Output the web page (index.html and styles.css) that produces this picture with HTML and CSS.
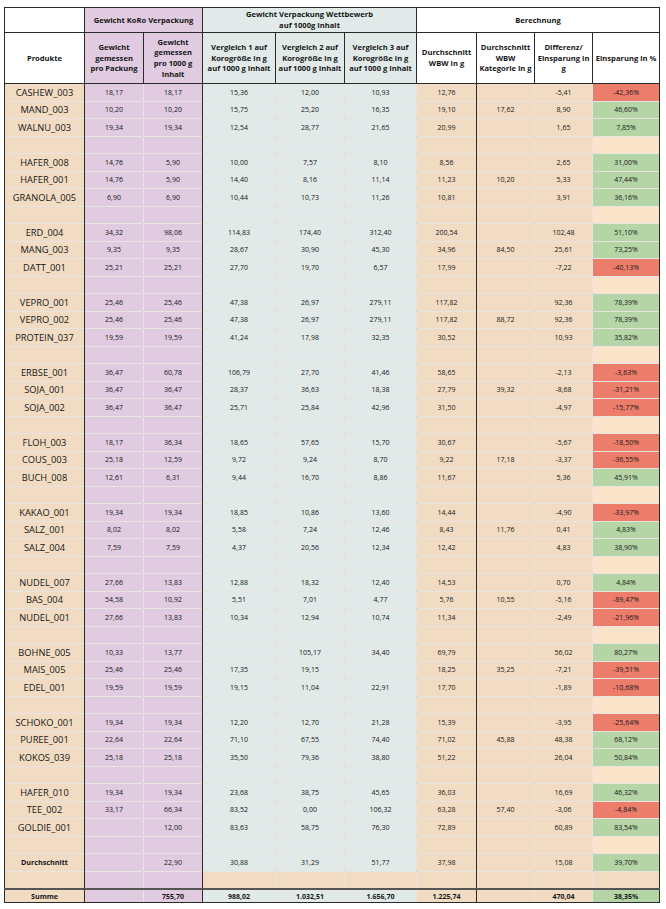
FILE: index.html
```html
<!DOCTYPE html>
<html lang="de">
<head>
<meta charset="utf-8">
<link rel="stylesheet" href="styles.css">
</head>
<body>
<table class="sheet">
<colgroup>
<col class="c-prod"><col class="c-k1"><col class="c-k2"><col class="c-v1"><col class="c-v2"><col class="c-v3"><col class="c-d"><col class="c-dk"><col class="c-diff"><col class="c-pct">
</colgroup>
<thead>
<tr class="h1">
<th class="hw lx"></th>
<th class="hk" colspan="2">Gewicht KoRo Verpackung</th>
<th class="hv" colspan="3">Gewicht Verpackung Wettbewerb<br>auf 1000g Inhalt</th>
<th class="hw rx" colspan="4">Berechnung</th>
</tr>
<tr class="h2">
<th class="hw lx">Produkte</th>
<th class="hk">Gewicht<br>gemessen<br>pro Packung</th>
<th class="hk">Gewicht<br>gemessen<br>pro 1000 g<br>Inhalt</th>
<th class="hv">Vergleich 1 auf<br>Korogröße in g<br>auf 1000 g Inhalt</th>
<th class="hv">Vergleich 2 auf<br>Korogröße in g<br>auf 1000 g Inhalt</th>
<th class="hv">Vergleich 3 auf<br>Korogröße in g<br>auf 1000 g Inhalt</th>
<th class="hw">Durchschnitt<br>WBW in g</th>
<th class="hw">Durchschnitt<br>WBW<br>Kategorie in g</th>
<th class="hw">Differenz/<br>Einsparung in<br>g</th>
<th class="hw rx">Einsparung in %</th>
</tr>
</thead>
<tbody>
<tr><td class="p">CASHEW_003</td><td class="k">18,17</td><td class="k kr">18,17</td><td class="w">15,36</td><td class="w">12,00</td><td class="w">10,93</td><td class="b dr">12,76</td><td class="b dl"></td><td class="b">-5,41</td><td class="neg">-42,36%</td></tr>
<tr><td class="p">MAND_003</td><td class="k">10,20</td><td class="k kr">10,20</td><td class="w">15,75</td><td class="w">25,20</td><td class="w">16,35</td><td class="b dr">19,10</td><td class="b dl">17,62</td><td class="b">8,90</td><td class="pos">46,60%</td></tr>
<tr><td class="p">WALNU_003</td><td class="k">19,34</td><td class="k kr">19,34</td><td class="w">12,54</td><td class="w">28,77</td><td class="w">21,65</td><td class="b dr">20,99</td><td class="b dl"></td><td class="b">1,65</td><td class="pos">7,85%</td></tr>
<tr><td class="p"></td><td class="k"></td><td class="k kr"></td><td class="w"></td><td class="w"></td><td class="w"></td><td class="b dr"></td><td class="b dl"></td><td class="b"></td><td class="gap"></td></tr>
<tr><td class="p">HAFER_008</td><td class="k">14,76</td><td class="k kr">5,90</td><td class="w">10,00</td><td class="w">7,57</td><td class="w">8,10</td><td class="b dr">8,56</td><td class="b dl"></td><td class="b">2,65</td><td class="pos">31,00%</td></tr>
<tr><td class="p">HAFER_001</td><td class="k">14,76</td><td class="k kr">5,90</td><td class="w">14,40</td><td class="w">8,16</td><td class="w">11,14</td><td class="b dr">11,23</td><td class="b dl">10,20</td><td class="b">5,33</td><td class="pos">47,44%</td></tr>
<tr><td class="p">GRANOLA_005</td><td class="k">6,90</td><td class="k kr">6,90</td><td class="w">10,44</td><td class="w">10,73</td><td class="w">11,26</td><td class="b dr">10,81</td><td class="b dl"></td><td class="b">3,91</td><td class="pos">36,16%</td></tr>
<tr><td class="p"></td><td class="k"></td><td class="k kr"></td><td class="w"></td><td class="w"></td><td class="w"></td><td class="b dr"></td><td class="b dl"></td><td class="b"></td><td class="gap"></td></tr>
<tr><td class="p">ERD_004</td><td class="k">34,32</td><td class="k kr">98,06</td><td class="w">114,83</td><td class="w">174,40</td><td class="w">312,40</td><td class="b dr">200,54</td><td class="b dl"></td><td class="b">102,48</td><td class="pos">51,10%</td></tr>
<tr><td class="p">MANG_003</td><td class="k">9,35</td><td class="k kr">9,35</td><td class="w">28,67</td><td class="w">30,90</td><td class="w">45,30</td><td class="b dr">34,96</td><td class="b dl">84,50</td><td class="b">25,61</td><td class="pos">73,25%</td></tr>
<tr><td class="p">DATT_001</td><td class="k">25,21</td><td class="k kr">25,21</td><td class="w">27,70</td><td class="w">19,70</td><td class="w">6,57</td><td class="b dr">17,99</td><td class="b dl"></td><td class="b">-7,22</td><td class="neg">-40,13%</td></tr>
<tr><td class="p"></td><td class="k"></td><td class="k kr"></td><td class="w"></td><td class="w"></td><td class="w"></td><td class="b dr"></td><td class="b dl"></td><td class="b"></td><td class="gap"></td></tr>
<tr><td class="p">VEPRO_001</td><td class="k">25,46</td><td class="k kr">25,46</td><td class="w">47,38</td><td class="w">26,97</td><td class="w">279,11</td><td class="b dr">117,82</td><td class="b dl"></td><td class="b">92,36</td><td class="pos">78,39%</td></tr>
<tr><td class="p">VEPRO_002</td><td class="k">25,46</td><td class="k kr">25,46</td><td class="w">47,38</td><td class="w">26,97</td><td class="w">279,11</td><td class="b dr">117,82</td><td class="b dl">88,72</td><td class="b">92,36</td><td class="pos">78,39%</td></tr>
<tr><td class="p">PROTEIN_037</td><td class="k">19,59</td><td class="k kr">19,59</td><td class="w">41,24</td><td class="w">17,98</td><td class="w">32,35</td><td class="b dr">30,52</td><td class="b dl"></td><td class="b">10,93</td><td class="pos">35,82%</td></tr>
<tr><td class="p"></td><td class="k"></td><td class="k kr"></td><td class="w"></td><td class="w"></td><td class="w"></td><td class="b dr"></td><td class="b dl"></td><td class="b"></td><td class="gap"></td></tr>
<tr><td class="p">ERBSE_001</td><td class="k">36,47</td><td class="k kr">60,78</td><td class="w">106,79</td><td class="w">27,70</td><td class="w">41,46</td><td class="b dr">58,65</td><td class="b dl"></td><td class="b">-2,13</td><td class="neg">-3,63%</td></tr>
<tr><td class="p">SOJA_001</td><td class="k">36,47</td><td class="k kr">36,47</td><td class="w">28,37</td><td class="w">36,63</td><td class="w">18,38</td><td class="b dr">27,79</td><td class="b dl">39,32</td><td class="b">-8,68</td><td class="neg">-31,21%</td></tr>
<tr><td class="p">SOJA_002</td><td class="k">36,47</td><td class="k kr">36,47</td><td class="w">25,71</td><td class="w">25,84</td><td class="w">42,96</td><td class="b dr">31,50</td><td class="b dl"></td><td class="b">-4,97</td><td class="neg">-15,77%</td></tr>
<tr><td class="p"></td><td class="k"></td><td class="k kr"></td><td class="w"></td><td class="w"></td><td class="w"></td><td class="b dr"></td><td class="b dl"></td><td class="b"></td><td class="gap"></td></tr>
<tr><td class="p">FLOH_003</td><td class="k">18,17</td><td class="k kr">36,34</td><td class="w">18,65</td><td class="w">57,65</td><td class="w">15,70</td><td class="b dr">30,67</td><td class="b dl"></td><td class="b">-5,67</td><td class="neg">-18,50%</td></tr>
<tr><td class="p">COUS_003</td><td class="k">25,18</td><td class="k kr">12,59</td><td class="w">9,72</td><td class="w">9,24</td><td class="w">8,70</td><td class="b dr">9,22</td><td class="b dl">17,18</td><td class="b">-3,37</td><td class="neg">-36,55%</td></tr>
<tr><td class="p">BUCH_008</td><td class="k">12,61</td><td class="k kr">6,31</td><td class="w">9,44</td><td class="w">16,70</td><td class="w">8,86</td><td class="b dr">11,67</td><td class="b dl"></td><td class="b">5,36</td><td class="pos">45,91%</td></tr>
<tr><td class="p"></td><td class="k"></td><td class="k kr"></td><td class="w"></td><td class="w"></td><td class="w"></td><td class="b dr"></td><td class="b dl"></td><td class="b"></td><td class="gap"></td></tr>
<tr><td class="p">KAKAO_001</td><td class="k">19,34</td><td class="k kr">19,34</td><td class="w">18,85</td><td class="w">10,86</td><td class="w">13,60</td><td class="b dr">14,44</td><td class="b dl"></td><td class="b">-4,90</td><td class="neg">-33,97%</td></tr>
<tr><td class="p">SALZ_001</td><td class="k">8,02</td><td class="k kr">8,02</td><td class="w">5,58</td><td class="w">7,24</td><td class="w">12,46</td><td class="b dr">8,43</td><td class="b dl">11,76</td><td class="b">0,41</td><td class="pos">4,83%</td></tr>
<tr><td class="p">SALZ_004</td><td class="k">7,59</td><td class="k kr">7,59</td><td class="w">4,37</td><td class="w">20,56</td><td class="w">12,34</td><td class="b dr">12,42</td><td class="b dl"></td><td class="b">4,83</td><td class="pos">38,90%</td></tr>
<tr><td class="p"></td><td class="k"></td><td class="k kr"></td><td class="w"></td><td class="w"></td><td class="w"></td><td class="b dr"></td><td class="b dl"></td><td class="b"></td><td class="gap"></td></tr>
<tr><td class="p">NUDEL_007</td><td class="k">27,66</td><td class="k kr">13,83</td><td class="w">12,88</td><td class="w">18,32</td><td class="w">12,40</td><td class="b dr">14,53</td><td class="b dl"></td><td class="b">0,70</td><td class="pos">4,84%</td></tr>
<tr><td class="p">BAS_004</td><td class="k">54,58</td><td class="k kr">10,92</td><td class="w">5,51</td><td class="w">7,01</td><td class="w">4,77</td><td class="b dr">5,76</td><td class="b dl">10,55</td><td class="b">-5,16</td><td class="neg">-89,47%</td></tr>
<tr><td class="p">NUDEL_001</td><td class="k">27,66</td><td class="k kr">13,83</td><td class="w">10,34</td><td class="w">12,94</td><td class="w">10,74</td><td class="b dr">11,34</td><td class="b dl"></td><td class="b">-2,49</td><td class="neg">-21,96%</td></tr>
<tr><td class="p"></td><td class="k"></td><td class="k kr"></td><td class="w"></td><td class="w"></td><td class="w"></td><td class="b dr"></td><td class="b dl"></td><td class="b"></td><td class="gap"></td></tr>
<tr><td class="p">BOHNE_005</td><td class="k">10,33</td><td class="k kr">13,77</td><td class="w"></td><td class="w">105,17</td><td class="w">34,40</td><td class="b dr">69,79</td><td class="b dl"></td><td class="b">56,02</td><td class="pos">80,27%</td></tr>
<tr><td class="p">MAIS_005</td><td class="k">25,46</td><td class="k kr">25,46</td><td class="w">17,35</td><td class="w">19,15</td><td class="w"></td><td class="b dr">18,25</td><td class="b dl">35,25</td><td class="b">-7,21</td><td class="neg">-39,51%</td></tr>
<tr><td class="p">EDEL_001</td><td class="k">19,59</td><td class="k kr">19,59</td><td class="w">19,15</td><td class="w">11,04</td><td class="w">22,91</td><td class="b dr">17,70</td><td class="b dl"></td><td class="b">-1,89</td><td class="neg">-10,68%</td></tr>
<tr><td class="p"></td><td class="k"></td><td class="k kr"></td><td class="w"></td><td class="w"></td><td class="w"></td><td class="b dr"></td><td class="b dl"></td><td class="b"></td><td class="gap"></td></tr>
<tr><td class="p">SCHOKO_001</td><td class="k">19,34</td><td class="k kr">19,34</td><td class="w">12,20</td><td class="w">12,70</td><td class="w">21,28</td><td class="b dr">15,39</td><td class="b dl"></td><td class="b">-3,95</td><td class="neg">-25,64%</td></tr>
<tr><td class="p">PUREE_001</td><td class="k">22,64</td><td class="k kr">22,64</td><td class="w">71,10</td><td class="w">67,55</td><td class="w">74,40</td><td class="b dr">71,02</td><td class="b dl">45,88</td><td class="b">48,38</td><td class="pos">68,12%</td></tr>
<tr><td class="p">KOKOS_039</td><td class="k">25,18</td><td class="k kr">25,18</td><td class="w">35,50</td><td class="w">79,36</td><td class="w">38,80</td><td class="b dr">51,22</td><td class="b dl"></td><td class="b">26,04</td><td class="pos">50,84%</td></tr>
<tr><td class="p"></td><td class="k"></td><td class="k kr"></td><td class="w"></td><td class="w"></td><td class="w"></td><td class="b dr"></td><td class="b dl"></td><td class="b"></td><td class="gap"></td></tr>
<tr><td class="p">HAFER_010</td><td class="k">19,34</td><td class="k kr">19,34</td><td class="w">23,68</td><td class="w">38,75</td><td class="w">45,65</td><td class="b dr">36,03</td><td class="b dl"></td><td class="b">16,69</td><td class="pos">46,32%</td></tr>
<tr><td class="p">TEE_002</td><td class="k">33,17</td><td class="k kr">66,34</td><td class="w">83,52</td><td class="w">0,00</td><td class="w">106,32</td><td class="b dr">63,28</td><td class="b dl">57,40</td><td class="b">-3,06</td><td class="neg">-4,84%</td></tr>
<tr><td class="p">GOLDIE_001</td><td class="k"></td><td class="k kr">12,00</td><td class="w">83,63</td><td class="w">58,75</td><td class="w">76,30</td><td class="b dr">72,89</td><td class="b dl"></td><td class="b">60,89</td><td class="pos">83,54%</td></tr>
<tr><td class="p"></td><td class="k"></td><td class="k kr"></td><td class="w"></td><td class="w"></td><td class="w"></td><td class="b dr"></td><td class="b dl"></td><td class="b"></td><td class="gap"></td></tr>
<tr><td class="p lbl">Durchschnitt</td><td class="k"></td><td class="k kr">22,90</td><td class="w">30,88</td><td class="w">31,29</td><td class="w">51,77</td><td class="b dr">37,98</td><td class="b dl"></td><td class="b">15,08</td><td class="pos">39,70%</td></tr>
<tr><td class="p"></td><td class="k"></td><td class="k kr"></td><td class="b"></td><td class="b"></td><td class="b"></td><td class="b dr"></td><td class="b dl"></td><td class="b"></td><td class="b"></td></tr>
<tr class="sum"><td class="p lbl">Summe</td><td class="k"></td><td class="k kr">755,70</td><td class="w">988,02</td><td class="w">1.032,51</td><td class="w">1.656,70</td><td class="b dr">1.225,74</td><td class="b dl"></td><td class="b">470,04</td><td class="pos">38,35%</td></tr>
</tbody>
</table>
</body>
</html>
```
FILE: styles.css
```css
html, body {
  margin: 0;
  padding: 0;
  background: #ffffff;
}
body {
  font-family: "Open Sans", "DejaVu Sans", sans-serif;
  color: #161616;
}
.sheet {
  border-collapse: collapse;
  table-layout: fixed;
  width: 655px;
  margin: 7px 0 0 4px;
}
.c-prod { width: 80px; }
.c-k1 { width: 59px; }
.c-k2 { width: 59px; }
.c-v1 { width: 73px; }
.c-v2 { width: 69px; }
.c-v3 { width: 72px; }
.c-d { width: 60px; }
.c-dk { width: 58px; }
.c-diff { width: 58px; }
.c-pct { width: 67px; }

.sheet th,
.sheet td {
  padding: 0;
  text-align: center;
  vertical-align: middle;
  overflow: hidden;
  white-space: nowrap;
}
.sheet th {
  border: 1px solid #2a2a2a;
  font-weight: 700;
  font-size: 7.6px;
  line-height: 10.6px;
  padding: 0 1px;
}
.h1 th { height: 24px; }
.h2 th { height: 50px; }
.hw { background: #ffffff; }
.hk { background: #e0cbe0; }
.hv { background: #e1eae8; }

.sheet td {
  height: 16.5px;
  border: 1px solid rgba(80, 50, 30, 0.13);
  font-size: 7px;
  font-weight: 500;
  line-height: 9px;
}
.p {
  background: #f1dcc3;
  font-size: 9.3px !important;
  border-left: 1px solid #2a2a2a !important;
  border-right: 1px solid #2a2a2a !important;
}
.k { background: #e0cbe0; }
.kr { border-right: 1px solid #2a2a2a !important; }
.w { background: #e1eae8; }
.b { background: #f1dcc3; }
.dr { border-right: 1px solid #2a2a2a !important; }
.dl { border-left: 1px solid #2a2a2a !important; }
.pos { background: #b5d5a6; border-right: 1px solid #2a2a2a !important; }
.neg { background: #ed7d6b; border-right: 1px solid #2a2a2a !important; }
.gap { background: #fce4cb; border-right: 1px solid #2a2a2a !important; }
.sheet td:last-child { border-right: 1px solid #2a2a2a; }
.lbl { font-weight: 700 !important; font-size: 7.2px !important; }

.sum td {
  height: 12px;
  border-top: 2px solid #555555 !important;
  border-bottom: 1px solid #2a2a2a !important;
  font-weight: 700;
}
```
